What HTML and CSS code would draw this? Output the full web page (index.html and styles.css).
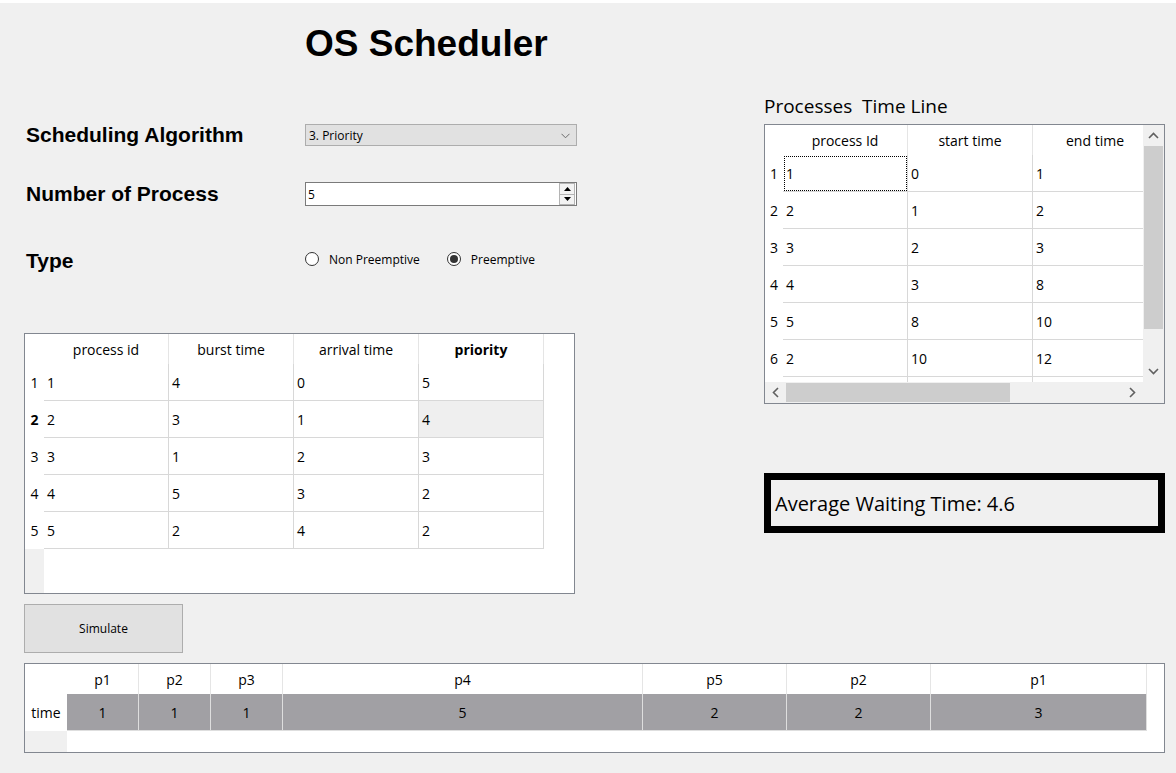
FILE: index.html
```html
<!DOCTYPE html>
<html>
<head>
<meta charset="utf-8">
<title>OS Scheduler</title>
<link rel="stylesheet" href="styles.css">
</head>
<body>
<div class="window">
  <div class="left">
    <h1 class="title">OS Scheduler</h1>
    <div class="form">
      <div class="row row-algo">
        <div class="lbl">Scheduling Algorithm</div>
        <div class="combo">
          <span>3. Priority</span>
          <svg class="chev" width="9" height="6" viewBox="0 0 9 6"><polyline points="0.5,0.8 4.5,4.8 8.5,0.8" fill="none" stroke="#6b6b6b" stroke-width="1"/></svg>
        </div>
      </div>
      <div class="row row-num">
        <div class="lbl">Number of Process</div>
        <div class="spin">
          <span>5</span>
          <div class="spin-btns">
            <div class="sb"><svg width="7" height="4" viewBox="0 0 7 4"><polygon points="0,4 3.5,0 7,4" fill="#000"/></svg></div>
            <div class="sb"><svg width="7" height="4" viewBox="0 0 7 4"><polygon points="0,0 3.5,4 7,0" fill="#000"/></svg></div>
          </div>
        </div>
      </div>
      <div class="row row-type">
        <div class="lbl">Type</div>
        <div class="radios">
          <span class="radio"><span class="circle"></span>Non Preemptive</span>
          <span class="radio checked"><span class="circle"><span class="dot"></span></span>Preemptive</span>
        </div>
      </div>
    </div>

    <div class="ptable">
      <div class="corner"></div>
      <div class="hc">process id</div>
      <div class="hc">burst time</div>
      <div class="hc">arrival time</div>
      <div class="hc bold">priority</div>
      <div class="fill"></div>

      <div class="vh">1</div><div class="cell">1</div><div class="cell">4</div><div class="cell">0</div><div class="cell">5</div><div class="fill"></div>
      <div class="vh bold">2</div><div class="cell">2</div><div class="cell">3</div><div class="cell">1</div><div class="cell sel">4</div><div class="fill"></div>
      <div class="vh">3</div><div class="cell">3</div><div class="cell">1</div><div class="cell">2</div><div class="cell">3</div><div class="fill"></div>
      <div class="vh">4</div><div class="cell">4</div><div class="cell">5</div><div class="cell">3</div><div class="cell">2</div><div class="fill"></div>
      <div class="vh">5</div><div class="cell">5</div><div class="cell">2</div><div class="cell">4</div><div class="cell">2</div><div class="fill"></div>

      <div class="vh-fill"></div>
      <div class="body-fill"></div>
    </div>

    <button class="simulate">Simulate</button>
  </div>

  <div class="right">
    <div class="tl-title">Processes  Time Line</div>
    <div class="tl">
      <div class="tl-view">
        <div class="tl-grid">
          <div class="corner"></div>
          <div class="hc">process Id</div>
          <div class="hc">start time</div>
          <div class="hc">end time</div>

          <div class="vh">1</div><div class="cell focus">1</div><div class="cell">0</div><div class="cell">1</div>
          <div class="vh">2</div><div class="cell">2</div><div class="cell">1</div><div class="cell">2</div>
          <div class="vh">3</div><div class="cell">3</div><div class="cell">2</div><div class="cell">3</div>
          <div class="vh">4</div><div class="cell">4</div><div class="cell">3</div><div class="cell">8</div>
          <div class="vh">5</div><div class="cell">5</div><div class="cell">8</div><div class="cell">10</div>
          <div class="vh">6</div><div class="cell">2</div><div class="cell">10</div><div class="cell">12</div>
          <div class="vh"></div><div class="cell"></div><div class="cell"></div><div class="cell"></div>
        </div>
      </div>
      <div class="vscroll">
        <div class="arrow"><svg width="11" height="7" viewBox="0 0 11 7"><polyline points="1,6 5.5,1.5 10,6" fill="none" stroke="#606060" stroke-width="1.6"/></svg></div>
        <div class="vtrack"><div class="vthumb"></div></div>
        <div class="arrow"><svg width="11" height="7" viewBox="0 0 11 7"><polyline points="1,1 5.5,5.5 10,1" fill="none" stroke="#606060" stroke-width="1.6"/></svg></div>
      </div>
      <div class="hscroll">
        <div class="arrow"><svg width="7" height="11" viewBox="0 0 7 11"><polyline points="6,1 1.5,5.5 6,10" fill="none" stroke="#606060" stroke-width="1.6"/></svg></div>
        <div class="htrack"><div class="hthumb"></div></div>
        <div class="arrow"><svg width="7" height="11" viewBox="0 0 7 11"><polyline points="1,1 5.5,5.5 1,10" fill="none" stroke="#606060" stroke-width="1.6"/></svg></div>
      </div>
      <div class="scorner"></div>
    </div>
    <div class="avg">Average Waiting Time: 4.6</div>
  </div>

  <div class="gantt">
    <div class="corner"></div>
    <div class="hc">p1</div>
    <div class="hc">p2</div>
    <div class="hc">p3</div>
    <div class="hc">p4</div>
    <div class="hc">p5</div>
    <div class="hc">p2</div>
    <div class="hc">p1</div>
    <div class="fill"></div>

    <div class="vh">time</div>
    <div class="gcell">1</div>
    <div class="gcell">1</div>
    <div class="gcell">1</div>
    <div class="gcell">5</div>
    <div class="gcell">2</div>
    <div class="gcell">2</div>
    <div class="gcell">3</div>
    <div class="fill"></div>

    <div class="vh-fill"></div>
    <div class="body-fill"></div>
  </div>
</div>
</body>
</html>
```

FILE: styles.css
```css
* { box-sizing: border-box; }

html, body {
  margin: 0;
  padding: 0;
  background: #f0f0f0;
}

body {
  font-family: "Open Sans", "Noto Sans", sans-serif;
  color: #000;
}

.window {
  width: 1176px;
  height: 773px;
  border-top: 3px solid #fff;
  padding: 0 11px 0 24px;
  display: grid;
  grid-template-columns: 553px 1fr 401px;
  grid-template-rows: auto auto;
  align-items: start;
  align-content: start;
}

/* ---------- left column ---------- */
.left {
  grid-column: 1;
  grid-row: 1;
  display: flex;
  flex-direction: column;
}

.title {
  margin: 20px 0 0 281px;
  font-family: "Liberation Sans", Arial, sans-serif;
  font-weight: bold;
  font-size: 37px;
  line-height: 42px;
  height: 42px;
  white-space: nowrap;
}

.form {
  display: flex;
  flex-direction: column;
  margin-top: 55px;
}

.row {
  display: grid;
  grid-template-columns: 281px 272px;
  align-items: center;
  height: 30px;
}
.row-num { margin-top: 29px; }
.row-type { margin-top: 35px; }

.lbl {
  padding-left: 2px;
  font-family: "Liberation Sans", Arial, sans-serif;
  font-weight: bold;
  font-size: 21px;
  line-height: 26px;
  white-space: nowrap;
}
.row-type .lbl { position: relative; top: 2px; }

.combo {
  height: 22px;
  border: 1px solid #adadad;
  background: #e1e1e1;
  display: flex;
  align-items: center;
  justify-content: space-between;
  padding: 0 6px 0 3px;
  font-size: 12px;
}
.combo .chev { margin-top: 1px; }

.spin {
  height: 24px;
  border: 1px solid #7a7a7a;
  background: #fff;
  display: flex;
  align-items: center;
  justify-content: space-between;
  padding: 0 1px 0 2px;
  font-size: 12px;
}
.spin-btns {
  display: flex;
  flex-direction: column;
  width: 16px;
  height: 22px;
}
.sb {
  flex: 1;
  display: flex;
  align-items: center;
  justify-content: center;
  background: #f3f3f3;
  border: 1px solid #b4b4b4;
}
.sb + .sb { border-top: none; }

.radios {
  display: flex;
  align-items: center;
  gap: 27px;
  font-size: 12px;
  white-space: nowrap;
}
.radio {
  display: flex;
  align-items: center;
  gap: 10px;
}
.circle {
  width: 14px;
  height: 14px;
  border: 1px solid #333;
  border-radius: 50%;
  background: #fff;
  display: flex;
  align-items: center;
  justify-content: center;
}
.dot {
  width: 8px;
  height: 8px;
  border-radius: 50%;
  background: #333;
}

/* process table */
.ptable {
  margin-top: 59px;
  width: 551px;
  height: 261px;
  border: 1px solid #828790;
  background: #fff;
  display: grid;
  grid-template-columns: 19px repeat(4, 125px) 1fr;
  grid-template-rows: 30px repeat(5, 37px) 1fr;
  font-size: 14px;
}

.hc {
  display: flex;
  align-items: center;
  justify-content: center;
  border-right: 1px solid #e5e5e5;
  white-space: nowrap;
}
.bold { font-weight: bold; }

.cell {
  display: flex;
  align-items: center;
  padding-left: 3px;
  border-right: 1px solid #d8d8d8;
  border-bottom: 1px solid #d8d8d8;
  white-space: nowrap;
}
.cell.sel { background: #efefef; }

.vh {
  display: flex;
  align-items: center;
  justify-content: center;
  background: #fff;
}
.vh-fill { background: #f0f0f0; }
.ptable .body-fill { grid-column: 2 / 7; }

.simulate {
  margin-top: 10px;
  width: 159px;
  height: 49px;
  border: 1px solid #adadad;
  background: #e1e1e1;
  font-family: "Open Sans", sans-serif;
  font-size: 12px;
  color: #000;
  padding: 0;
}

/* ---------- right column ---------- */
.right {
  grid-column: 3;
  grid-row: 1;
  display: flex;
  flex-direction: column;
}

.tl-title {
  margin-top: 91px;
  font-size: 19px;
  line-height: 24px;
  height: 24px;
  white-space: pre;
}

.tl {
  margin-top: 6px;
  width: 401px;
  height: 280px;
  border: 1px solid #828790;
  background: #fff;
  display: grid;
  grid-template-columns: 1fr 21px;
  grid-template-rows: 1fr 21px;
}
.tl-view {
  overflow: hidden;
  position: relative;
}
.tl-grid {
  display: grid;
  grid-template-columns: 18px repeat(3, 125px);
  grid-template-rows: 30px repeat(7, 37px);
  width: 393px;
  font-size: 14px;
}
.tl-grid .hc { border-right: 1px solid #e5e5e5; }
.cell.focus {
  outline: 1px dotted #000;
  outline-offset: -2px;
}

.vscroll {
  background: #f0f0f0;
  display: flex;
  flex-direction: column;
}
.vscroll .arrow {
  height: 21px;
  display: flex;
  align-items: center;
  justify-content: center;
}
.vtrack { flex: 1; display: flex; flex-direction: column; padding: 0 1px; }
.vthumb { height: 183px; background: #cdcdcd; }

.hscroll {
  background: #f0f0f0;
  display: flex;
}
.hscroll .arrow {
  width: 21px;
  display: flex;
  align-items: center;
  justify-content: center;
}
.htrack { flex: 1; display: flex; padding: 1px 0; }
.hthumb { width: 224px; background: #cdcdcd; }
.scorner { background: #f0f0f0; }

.avg {
  margin-top: 69px;
  width: 401px;
  height: 60px;
  border: 7px solid #000;
  background: #f0f0f0;
  display: flex;
  align-items: center;
  padding-left: 4px;
  font-size: 20px;
  white-space: nowrap;
}

/* ---------- gantt ---------- */
.gantt {
  grid-column: 1 / 4;
  grid-row: 2;
  margin-top: 10px;
  width: 1141px;
  height: 90px;
  border: 1px solid #828790;
  background: #fff;
  display: grid;
  grid-template-columns: 42px 72px 72px 72px 360px 144px 144px 216px 1fr;
  grid-template-rows: 30px 37px 1fr;
  font-size: 14px;
}
.gantt .hc { border-right: 1px solid #e5e5e5; }
.gcell {
  display: flex;
  align-items: center;
  justify-content: center;
  background: #a1a0a4;
  border-right: 1px solid #dedede;
  border-bottom: 1px solid #dedede;
}
.gantt .body-fill { grid-column: 2 / 10; }
```
